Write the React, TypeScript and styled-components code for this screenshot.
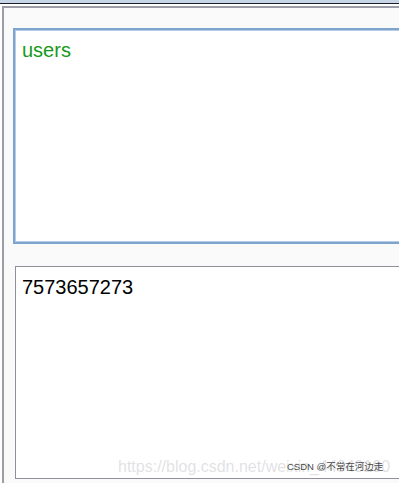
import React from "react";
import styled, { createGlobalStyle } from "styled-components";

const Global = createGlobalStyle`
  *, *::before, *::after { box-sizing: border-box; }
  html, body { margin: 0; padding: 0; background: #ffffff; }
  body { font-family: "Liberation Sans", Arial, sans-serif; width: 399px; height: 483px; overflow: hidden; }
`;

const Page = styled.div`
  display: flex;
  flex-direction: column;
  width: 399px;
  height: 483px;
  overflow: hidden;
  background: #ffffff;
`;

const TitleStrip = styled.div`
  height: 4px;
  background: #c7d6e6;
  border-bottom: 1px solid #1c1e2a;
  flex: none;
`;

const Frame = styled.div`
  margin: 2px 0 0 2px;
  flex: 1;
  background: #fafafa;
  border-top: 2px solid #9a9ca6;
  border-left: 2px solid #9a9ca6;
  padding: 20px 0 0 9px;
  display: flex;
  flex-direction: column;
`;

const EditBox = styled.div`
  height: 216px;
  flex: none;
  background: #ffffff;
  border: 2px solid #7ea3cc;
  border-right: none;
  box-shadow: inset 1px 1px 0 #b4cde8, inset 0 -1px 0 #b4cde8;
  padding: 9px 0 0 7px;
  font-size: 20px;
  color: #17991a;
`;

const OutputBox = styled.div`
  margin: 22px 0 0 2px;
  height: 213px;
  flex: none;
  background: #ffffff;
  border: 1px solid #8f909c;
  border-right: none;
  padding: 9px 0 0 6px;
  font-size: 20px;
  color: #000000;
  position: relative;
`;

const Watermark = styled.div`
  position: absolute;
  left: 102px;
  bottom: 2px;
  font-size: 16px;
  color: rgba(200, 200, 205, 0.55);
  white-space: nowrap;
`;

const Credit = styled.div`
  position: absolute;
  left: 271px;
  bottom: 5px;
  font-size: 9.5px;
  color: #4a4a4a;
  white-space: nowrap;
  font-family: "Liberation Sans", "Noto Sans CJK SC", sans-serif;
`;

export default function App() {
  return (
    <>
      <Global />
      <Page>
        <TitleStrip />
        <Frame>
          <EditBox>users</EditBox>
          <OutputBox>
            7573657273
            <Watermark>https://blog.csdn.net/weixin_44949190</Watermark>
            <Credit>CSDN @不常在河边走</Credit>
          </OutputBox>
        </Frame>
      </Page>
    </>
  );
}
